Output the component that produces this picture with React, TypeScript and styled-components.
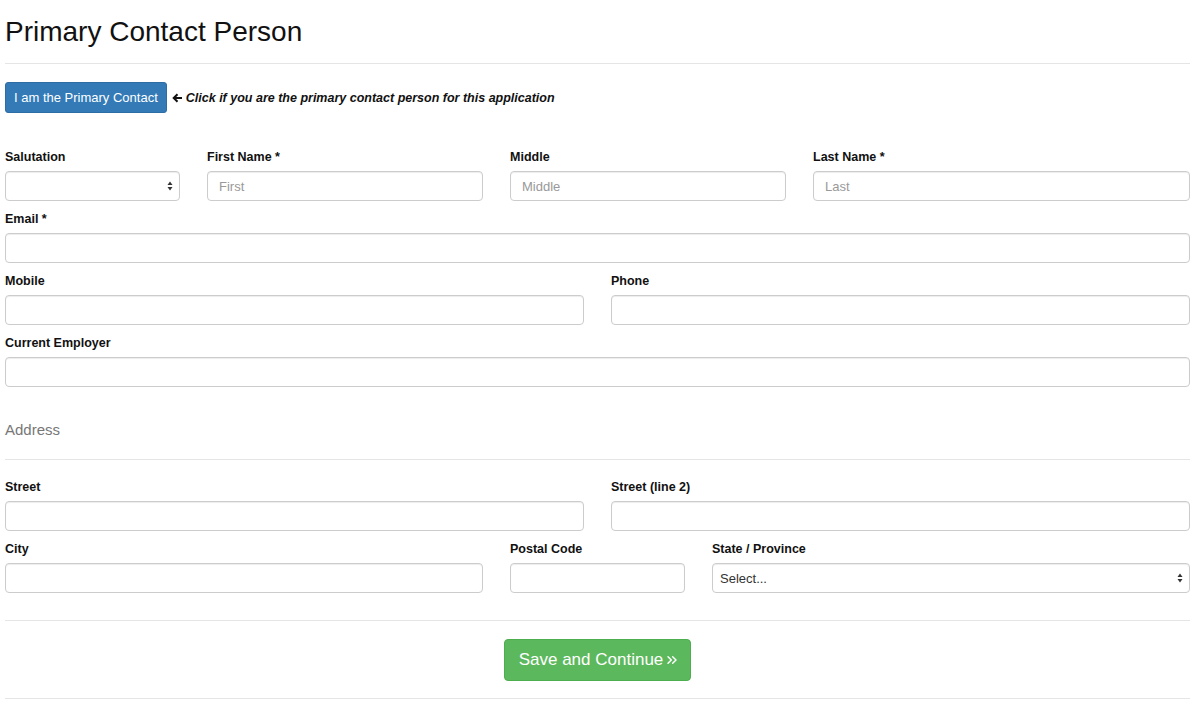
import styled, { createGlobalStyle } from "styled-components";
import { ChevronsRight } from "lucide-react";

const Global = createGlobalStyle`
  body {
    margin: 0;
    background: #fff;
    font-family: "Liberation Sans", Arial, sans-serif;
    color: #111;
  }
  * { box-sizing: border-box; }
`;

const Page = styled.div`
  padding: 0 10px 0 5px;
  width: 1200px;
`;

const Title = styled.h2`
  margin: 0;
  padding-top: 16px;
  font-size: 28px;
  font-weight: 400;
  line-height: 32px;
  height: 64px;
  border-bottom: 1px solid #e5e5e5;
`;

const PrimaryRow = styled.div`
  display: flex;
  align-items: center;
  gap: 5px;
  margin-top: 18px;
  margin-bottom: 35px;
`;

const BlueButton = styled.button`
  height: 31px;
  padding: 0 8px;
  background: #337ab7;
  border: 1px solid #2e6da4;
  border-radius: 3px;
  color: #fff;
  font-family: inherit;
  font-size: 13px;
`;

const Hint = styled.span`
  font-size: 12.5px;
  font-weight: 700;
  font-style: italic;
  display: flex;
  align-items: center;
  gap: 3px;
`;

const Grid = styled.div`
  display: grid;
  grid-template-columns: repeat(12, 1fr);
  column-gap: 27px;
`;

const Field = styled.div<{ $span: number }>`
  grid-column: span ${(p) => p.$span};
  margin-bottom: 9px;
`;

const Label = styled.label`
  display: block;
  font-size: 12.5px;
  font-weight: 700;
  line-height: 18px;
  margin-bottom: 5px;
`;

const Input = styled.input`
  display: block;
  width: 100%;
  height: 30px;
  padding: 0 11px;
  border: 1px solid #ccc;
  border-radius: 4px;
  box-shadow: inset 0 1px 1px rgba(0, 0, 0, 0.075);
  font-family: inherit;
  font-size: 13px;
  color: #555;
  &::placeholder { color: #999; }
`;

const SelectBox = styled.div`
  height: 30px;
  border: 1px solid #ccc;
  border-radius: 4px;
  display: flex;
  align-items: center;
  justify-content: space-between;
  padding: 0 6px 0 7px;
  font-size: 13px;
  color: #333;
  box-shadow: inset 0 1px 1px rgba(0, 0, 0, 0.075);
`;

const SubHead = styled.div`
  margin-top: 25px;
  font-size: 15px;
  font-weight: 300;
  color: #777;
  padding-bottom: 21px;
  border-bottom: 1px solid #e5e5e5;
  margin-bottom: 18px;
`;

const Footer = styled.div`
  border-top: 1px solid #e5e5e5;
  border-bottom: 1px solid #e5e5e5;
  margin-top: 18px;
  padding: 18px 0 17px;
  display: flex;
  justify-content: center;
`;

const GreenButton = styled.button`
  height: 42px;
  padding: 0 10px 0 14px;
  background: #5cb85c;
  border: 1px solid #4cae4c;
  border-radius: 4px;
  color: #fff;
  font-family: inherit;
  font-size: 17px;
  display: flex;
  align-items: center;
  gap: 1px;
`;

const Arrows = () => (
  <svg width="6" height="10" viewBox="0 0 6 10">
    <path d="M3 0.5 L5.5 4 H0.5 Z" fill="#333" />
    <path d="M3 9.5 L5.5 6 H0.5 Z" fill="#333" />
  </svg>
);

const LeftArrow = () => (
  <svg width="11" height="10" viewBox="0 0 11 10">
    <path d="M10 5 H2 M5.5 1.2 L1.7 5 L5.5 8.8" stroke="#111" strokeWidth="2" fill="none" />
  </svg>
);

const TextField = ({ span, label, placeholder }: { span: number; label: string; placeholder?: string }) => (
  <Field $span={span}>
    <Label>{label}</Label>
    <Input placeholder={placeholder} />
  </Field>
);

const SelectField = ({ span, label, value }: { span: number; label: string; value?: string }) => (
  <Field $span={span}>
    <Label>{label}</Label>
    <SelectBox>
      <span>{value}</span>
      <Arrows />
    </SelectBox>
  </Field>
);

export default function App() {
  return (
    <Page>
      <Global />
      <Title>Primary Contact Person</Title>
      <PrimaryRow>
        <BlueButton>I am the Primary Contact</BlueButton>
        <Hint>
          <LeftArrow />
          Click if you are the primary contact person for this application
        </Hint>
      </PrimaryRow>
      <Grid>
        <SelectField span={2} label="Salutation" />
        <TextField span={3} label="First Name *" placeholder="First" />
        <TextField span={3} label="Middle" placeholder="Middle" />
        <TextField span={4} label="Last Name *" placeholder="Last" />
        <TextField span={12} label="Email *" />
        <TextField span={6} label="Mobile" />
        <TextField span={6} label="Phone" />
        <TextField span={12} label="Current Employer" />
      </Grid>
      <SubHead>Address</SubHead>
      <Grid>
        <TextField span={6} label="Street" />
        <TextField span={6} label="Street (line 2)" />
        <TextField span={5} label="City" />
        <TextField span={2} label="Postal Code" />
        <SelectField span={5} label="State / Province" value="Select..." />
      </Grid>
      <Footer>
        <GreenButton>
          Save and Continue
          <ChevronsRight size={16} strokeWidth={2.2} />
        </GreenButton>
      </Footer>
    </Page>
  );
}
